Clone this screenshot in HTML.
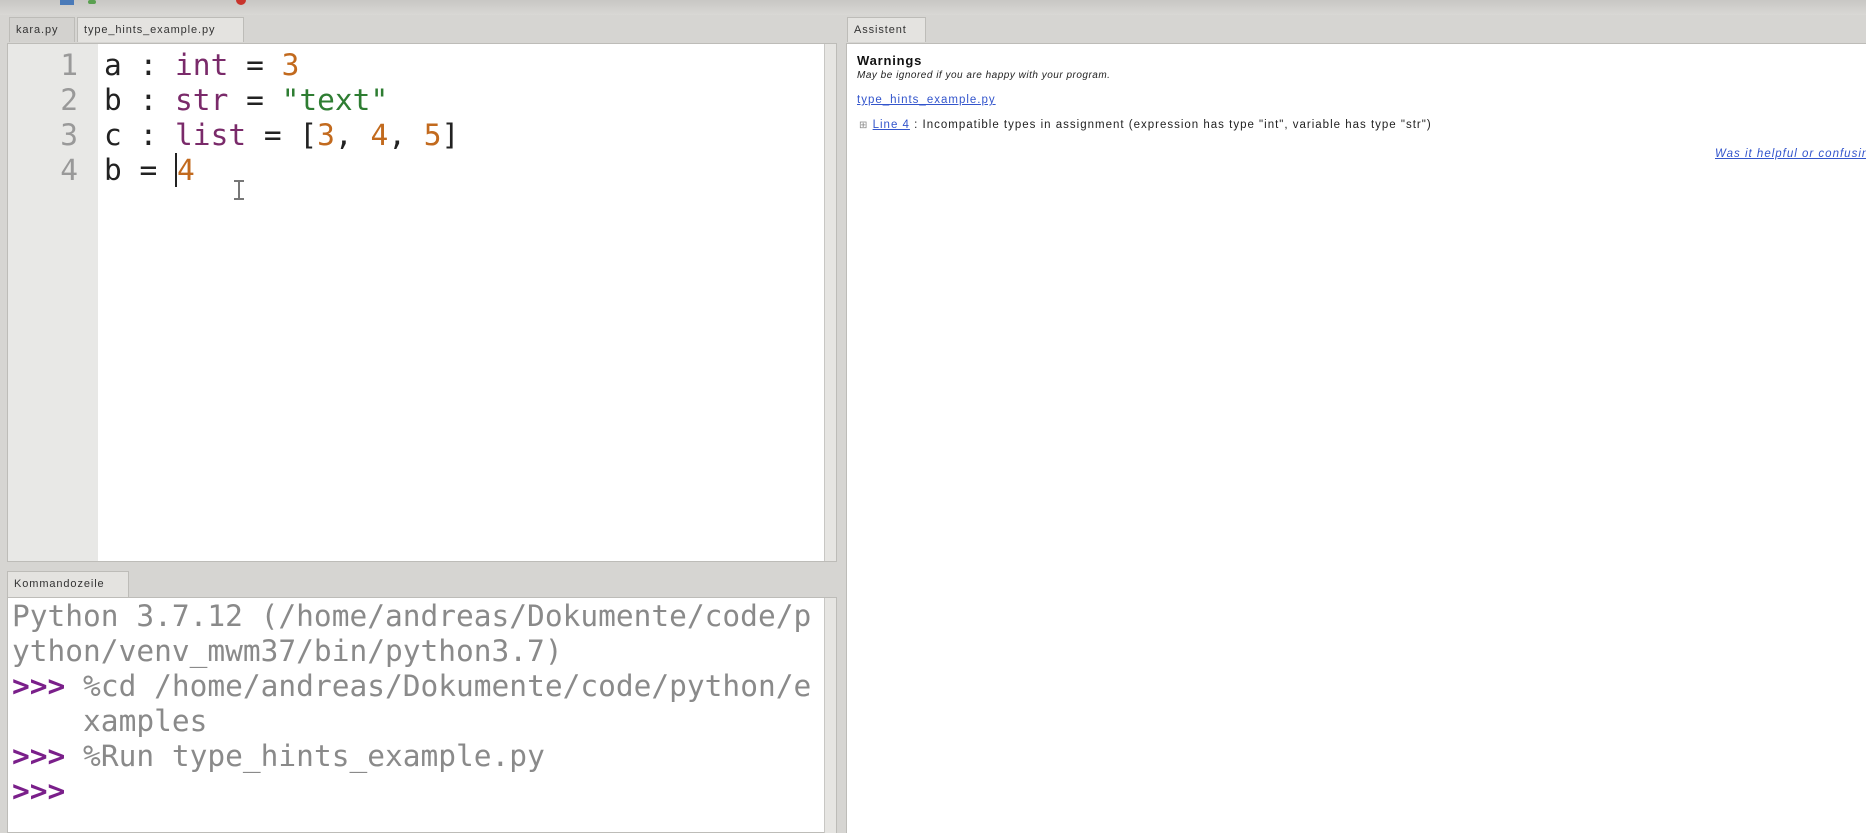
<!DOCTYPE html>
<html><head><meta charset="utf-8"><style>
*{margin:0;padding:0;box-sizing:border-box}
body{width:1866px;height:833px;overflow:hidden;background:#d6d5d2;font-family:"Liberation Sans",sans-serif;position:relative}
.abs{position:absolute}
.top{left:0;top:0;width:1866px;height:15px;background:linear-gradient(#c8c7c4,#d9d8d5)}
.tab{position:absolute;height:25px;font-size:11px;color:#333;padding:6px 6px 0;border:1px solid #bdbcb8;border-bottom:none;background:#d3d2cf;letter-spacing:0.9px;white-space:nowrap}
.tab.act{background:#e4e3e0}
.code{font-family:"DejaVu Sans Mono","Liberation Mono",monospace;font-size:29.5px;line-height:35px;white-space:pre}
.k{color:#7a2a6a}.n{color:#c26a1e}.s{color:#2e7d32}
.sb{position:absolute;background:#e6e5e2;border-left:1px solid #c8c7c4}
</style></head><body>
<div class="abs top"></div>
<div class="abs" style="left:60px;top:0;width:14px;height:5px;background:#4a7ab8"></div>
<div class="abs" style="left:88px;top:0;width:8px;height:4px;background:#5aa050;border-radius:4px"></div>
<div class="abs" style="left:236px;top:0;width:10px;height:5px;background:#c8342c;border-radius:0 0 5px 5px"></div>

<div class="tab" style="left:9px;top:17px;width:66px">kara.py</div>
<div class="tab act" style="left:77px;top:17px;width:167px">type_hints_example.py</div>

<div class="abs" style="left:7px;top:43px;width:830px;height:519px;background:#fff;border:1px solid #bdbcb8"></div>
<div class="abs" style="left:8px;top:44px;width:90px;height:517px;background:#e8e8e6"></div>
<div class="sb" style="left:824px;top:44px;width:12px;height:517px"></div>
<div class="abs code" style="left:8px;top:48px;width:70px;text-align:right;color:#999">1
2
3
4</div>
<div class="abs code" style="left:104px;top:48px;color:#222">a : <span class="k">int</span> = <span class="n">3</span>
b : <span class="k">str</span> = <span class="s">"text"</span>
c : <span class="k">list</span> = [<span class="n">3</span>, <span class="n">4</span>, <span class="n">5</span>]
b = <span style="border-left:2px solid #222" class="n">4</span></div>
<div class="abs" style="left:238px;top:180px;width:2px;height:20px;background:#777"></div>
<div class="abs" style="left:234px;top:180px;width:10px;height:2px;background:#777"></div>
<div class="abs" style="left:234px;top:198px;width:10px;height:2px;background:#777"></div>

<div class="tab act" style="left:7px;top:571px;width:122px;height:26px">Kommandozeile</div>
<div class="abs" style="left:7px;top:597px;width:830px;height:236px;background:#fff;border:1px solid #bdbcb8"></div>
<div class="sb" style="left:824px;top:598px;width:12px;height:235px"></div>
<div class="abs code" style="left:12px;top:599px;color:#8a8a8a">Python 3.7.12 (/home/andreas/Dokumente/code/p
ython/venv_mwm37/bin/python3.7)
<b style="color:#7a1f8a">&gt;&gt;&gt;</b> %cd /home/andreas/Dokumente/code/python/e
    xamples
<b style="color:#7a1f8a">&gt;&gt;&gt;</b> %Run type_hints_example.py
<b style="color:#7a1f8a">&gt;&gt;&gt;</b></div>

<div class="tab act" style="left:847px;top:17px;width:79px">Assistent</div>
<div class="abs" style="left:846px;top:43px;width:1020px;height:790px;background:#fff;border-top:1px solid #bdbcb8;border-left:1px solid #bdbcb8"></div>
<div class="abs" style="left:857px;top:53px;font-size:13px;font-weight:bold;color:#111;letter-spacing:0.8px">Warnings</div>
<div class="abs" style="left:857px;top:70px;font-size:10px;font-style:italic;color:#222;letter-spacing:0.5px">May be ignored if you are happy with your program.</div>
<div class="abs" style="left:857px;top:94px;font-size:11.5px;color:#3355cc;text-decoration:underline;letter-spacing:1px">type_hints_example.py</div>
<div class="abs" style="left:859px;top:119px;font-size:11.5px;color:#222;letter-spacing:1px;white-space:nowrap"><span style="color:#888;font-size:10px">⊞</span> <span style="color:#3355cc;text-decoration:underline">Line 4</span> : Incompatible types in assignment (expression has type "int", variable has type "str")</div>
<div class="abs" style="left:1715px;top:148px;font-size:11.5px;font-style:italic;color:#3355cc;text-decoration:underline;white-space:nowrap;letter-spacing:1px">Was it helpful or confusing?</div>
</body></html>
